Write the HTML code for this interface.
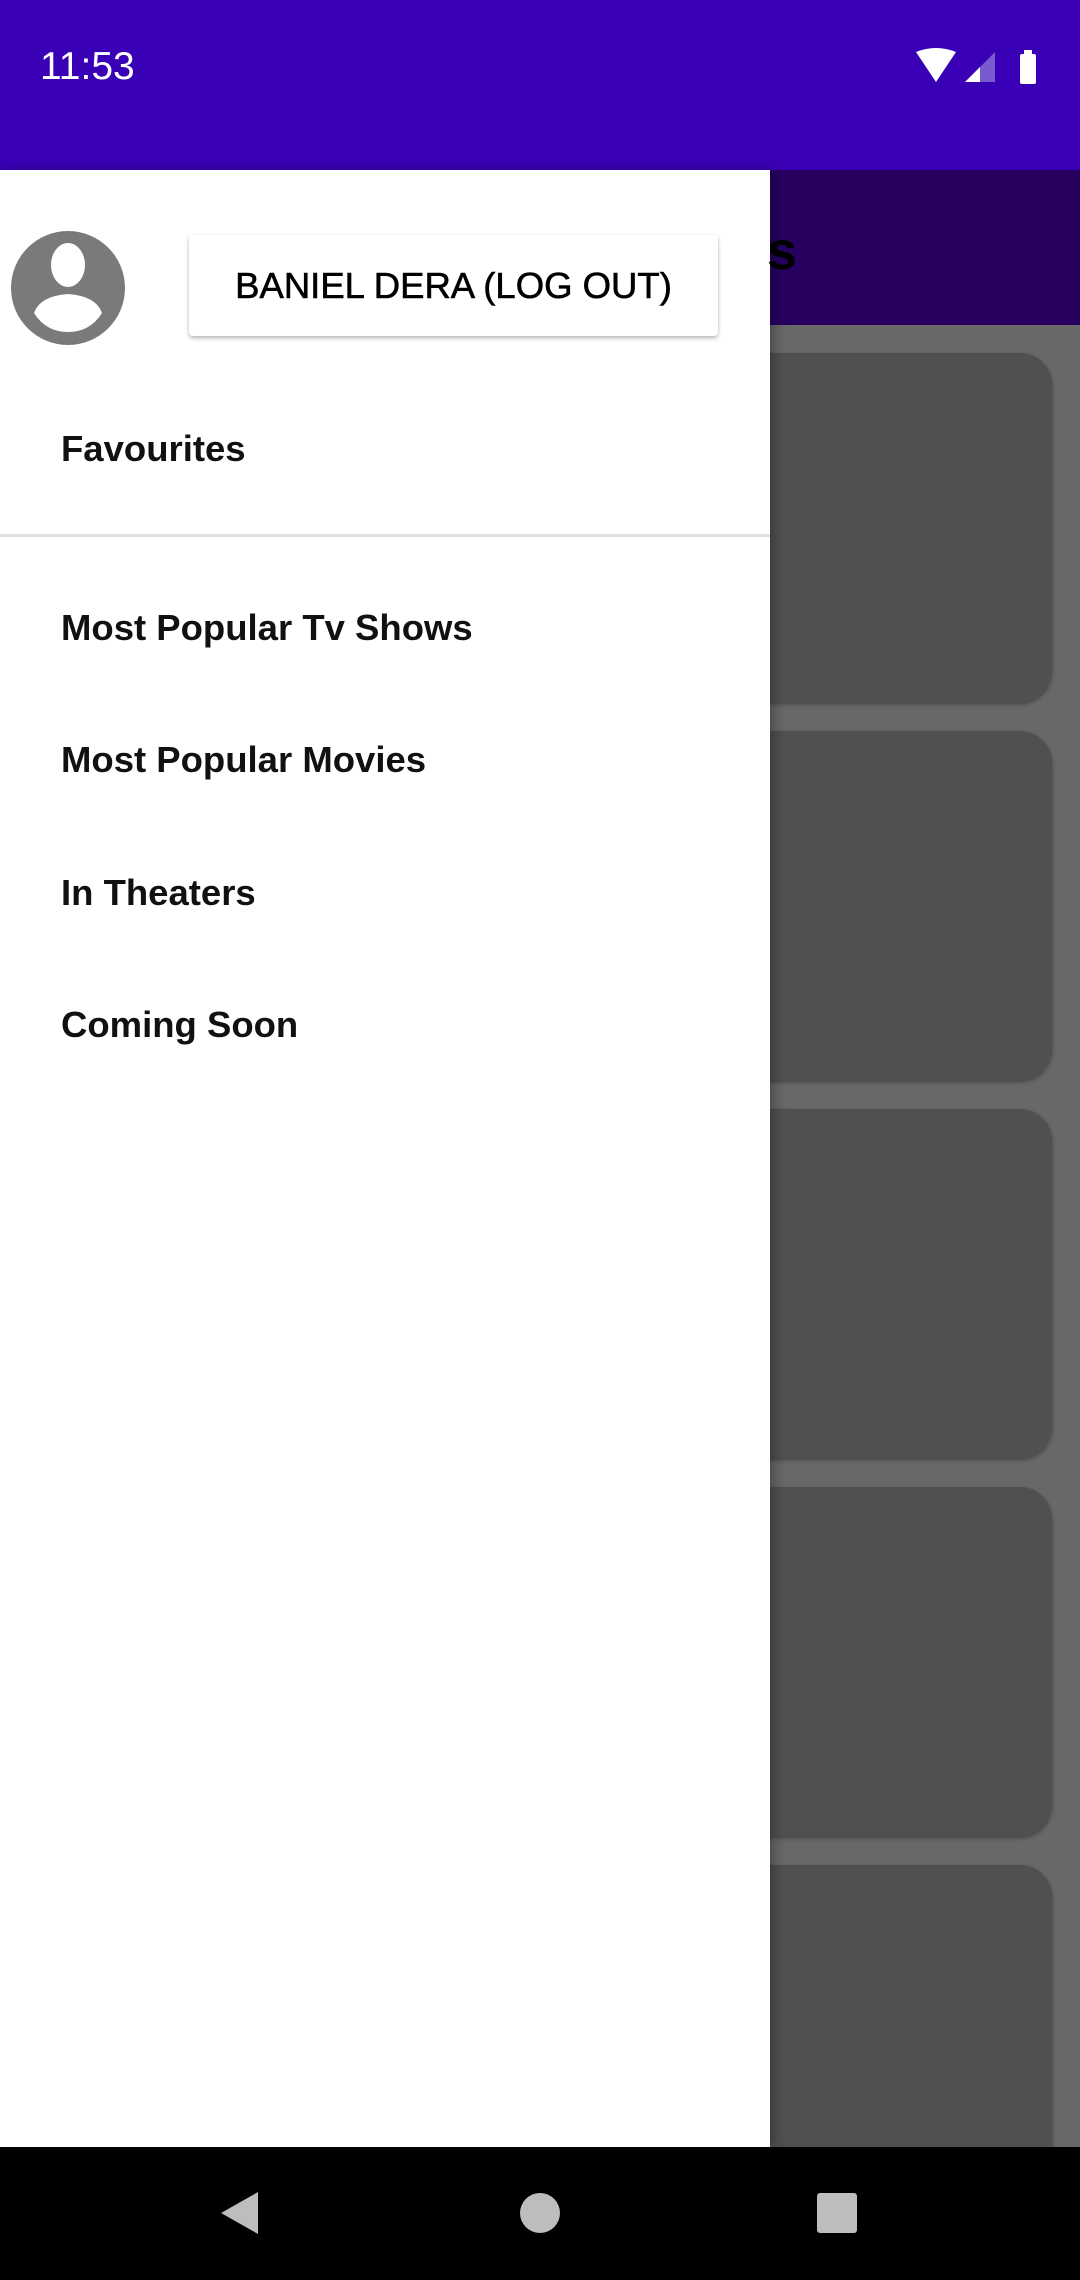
<!DOCTYPE html>
<html><head><meta charset="utf-8"><style>
*{margin:0;padding:0;box-sizing:border-box}
body{width:1080px;height:2280px;position:relative;overflow:hidden;background:#686868;font-family:"Liberation Sans",sans-serif}
.abs{position:absolute}
.card{position:absolute;left:700px;width:352px;height:349px;background:#505050;border-radius:32px;box-shadow:0 2px 4px rgba(0,0,0,.35)}
.item{position:absolute;left:61px;font-size:36.5px;font-weight:bold;color:#111}
</style></head><body>
<div class="abs" style="left:0;top:0;width:1080px;height:170px;background:#3a00b5"></div>
<div class="abs" style="left:40px;top:45px;color:#fff;font-size:39px">11:53</div>
<svg class="abs" style="left:910px;top:48px" width="140" height="36" viewBox="0 0 140 36">
<path d="M6 4 Q26 -4 46 4 L26 34 Z" fill="#fff"/>
<path d="M55 34 L85 4 L85 34 Z" fill="#7a5ad0"/>
<path d="M55 34 L70 19 L70 34 Z" fill="#fff"/>
<rect x="110" y="6" width="16" height="30" rx="2" fill="#fff"/><rect x="114" y="2" width="8" height="5" fill="#fff"/>
</svg>
<div class="abs" style="left:770px;top:170px;width:310px;height:155px;background:#270060"></div>
<div class="card" style="top:353px"></div>
<div class="card" style="top:731px"></div>
<div class="card" style="top:1109px"></div>
<div class="card" style="top:1487px"></div>
<div class="card" style="top:1865px"></div>
<div class="abs" style="left:0;top:170px;width:770px;height:1977px;background:#fff;box-shadow:4px 0 12px rgba(0,0,0,.3)"></div>
<div class="abs" style="left:767px;top:220px;font-size:54px;color:#000;font-weight:bold">s</div>
<svg class="abs" style="left:10px;top:230px" width="116" height="116" viewBox="0 0 116 116">
<ellipse cx="58" cy="58" rx="57" ry="57" fill="#7a7a7a"/>
<ellipse cx="58" cy="35" rx="17" ry="22" fill="#fff"/>
<path d="M24 83 Q30 66 58 64 Q86 66 92 83 Q80 102 58 102 Q36 102 24 83Z" fill="#fff"/>
</svg>
<div class="abs" style="left:189px;top:235px;width:529px;height:101px;background:#fff;border-radius:4px;box-shadow:0 2px 4px rgba(0,0,0,.3);display:flex;align-items:center;justify-content:center;font-size:36.5px;color:#000;-webkit-text-stroke:0.6px #000">BANIEL DERA (LOG OUT)</div>
<div class="item" style="top:428px">Favourites</div>
<div class="abs" style="left:0;top:534px;width:770px;height:3px;background:#e0e0e0"></div>
<div class="item" style="top:607px">Most Popular Tv Shows</div>
<div class="item" style="top:739px">Most Popular Movies</div>
<div class="item" style="top:872px">In Theaters</div>
<div class="item" style="top:1004px">Coming Soon</div>
<div class="abs" style="left:0;top:2147px;width:1080px;height:133px;background:#000"></div>
<svg class="abs" style="left:0;top:2147px" width="1080" height="133">
<path d="M221 66 L258 45 L258 87 Z" fill="#bdbdbd"/>
<circle cx="540" cy="66" r="20" fill="#bdbdbd"/>
<rect x="817" y="46" width="40" height="40" rx="3" fill="#bdbdbd"/>
</svg>
</body></html>
